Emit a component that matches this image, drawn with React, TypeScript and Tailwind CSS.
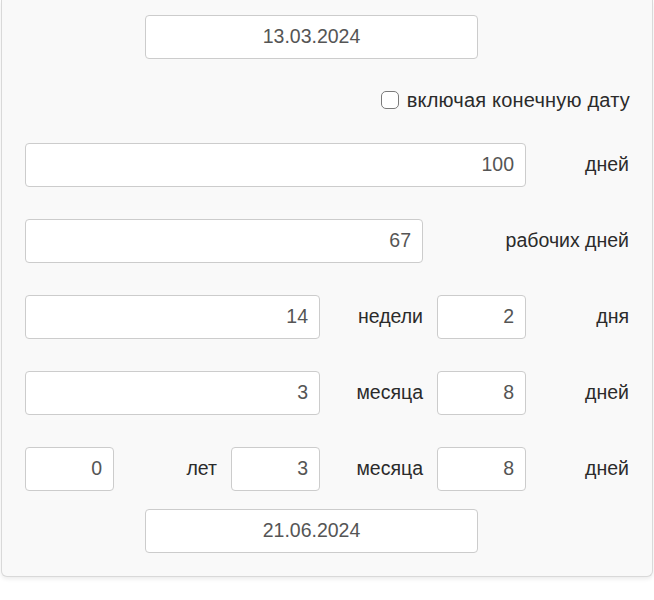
import React from "react";

const inputCls =
  "h-[44px] bg-white border border-[#cccccc] rounded-[4px] text-[19.5px] text-[#555555] flex items-center";

function Num({ v, span = "" }: { v: string; span?: string }) {
  return (
    <div className={`${inputCls} justify-end pr-[11px] ${span}`}>{v}</div>
  );
}

function Label({ t, span = "" }: { t: string; span?: string }) {
  return (
    <div className={`h-[44px] flex items-center justify-end text-[19.5px] text-[#2b2b2b] whitespace-nowrap ${span}`}>
      {t}
    </div>
  );
}

export default function App() {
  return (
    <div
      className="min-h-[600px] bg-white"
      style={{ fontFamily: '"Liberation Sans", Arial, sans-serif' }}
    >
      <div className="ml-[1px] w-[652px] bg-[#f9f9f9] border border-t-0 border-[#d9d9d9] rounded-b-[6px] shadow-[0_2px_4px_rgba(0,0,0,0.08)] pt-[15px] pb-[23px]">
        <div className={`${inputCls} justify-center ml-[143px] w-[333px]`}>13.03.2024</div>

        <div className="mt-[30px] h-[22px] flex items-center justify-end pr-[22px] gap-[8px]">
          <span className="w-[18px] h-[18px] rounded-[5px] border-[1.5px] border-[#7a7a7a] bg-white" />
          <span className="text-[20px] tracking-[0.2px] text-[#2b2b2b]">включая конечную дату</span>
        </div>

        <div className="ml-[23px] w-[604px] mt-[32px] grid grid-cols-[repeat(6,89px)] gap-x-[14px] gap-y-[32px]">
          <Num v="100" span="col-span-5" />
          <Label t="дней" />

          <Num v="67" span="col-span-4" />
          <Label t="рабочих дней" span="col-span-2" />

          <Num v="14" span="col-span-3" />
          <Label t="недели" />
          <Num v="2" />
          <Label t="дня" />

          <Num v="3" span="col-span-3" />
          <Label t="месяца" />
          <Num v="8" />
          <Label t="дней" />

          <Num v="0" />
          <Label t="лет" />
          <Num v="3" />
          <Label t="месяца" />
          <Num v="8" />
          <Label t="дней" />
        </div>

        <div className={`${inputCls} justify-center ml-[143px] w-[333px] mt-[18px]`}>21.06.2024</div>
      </div>
    </div>
  );
}
